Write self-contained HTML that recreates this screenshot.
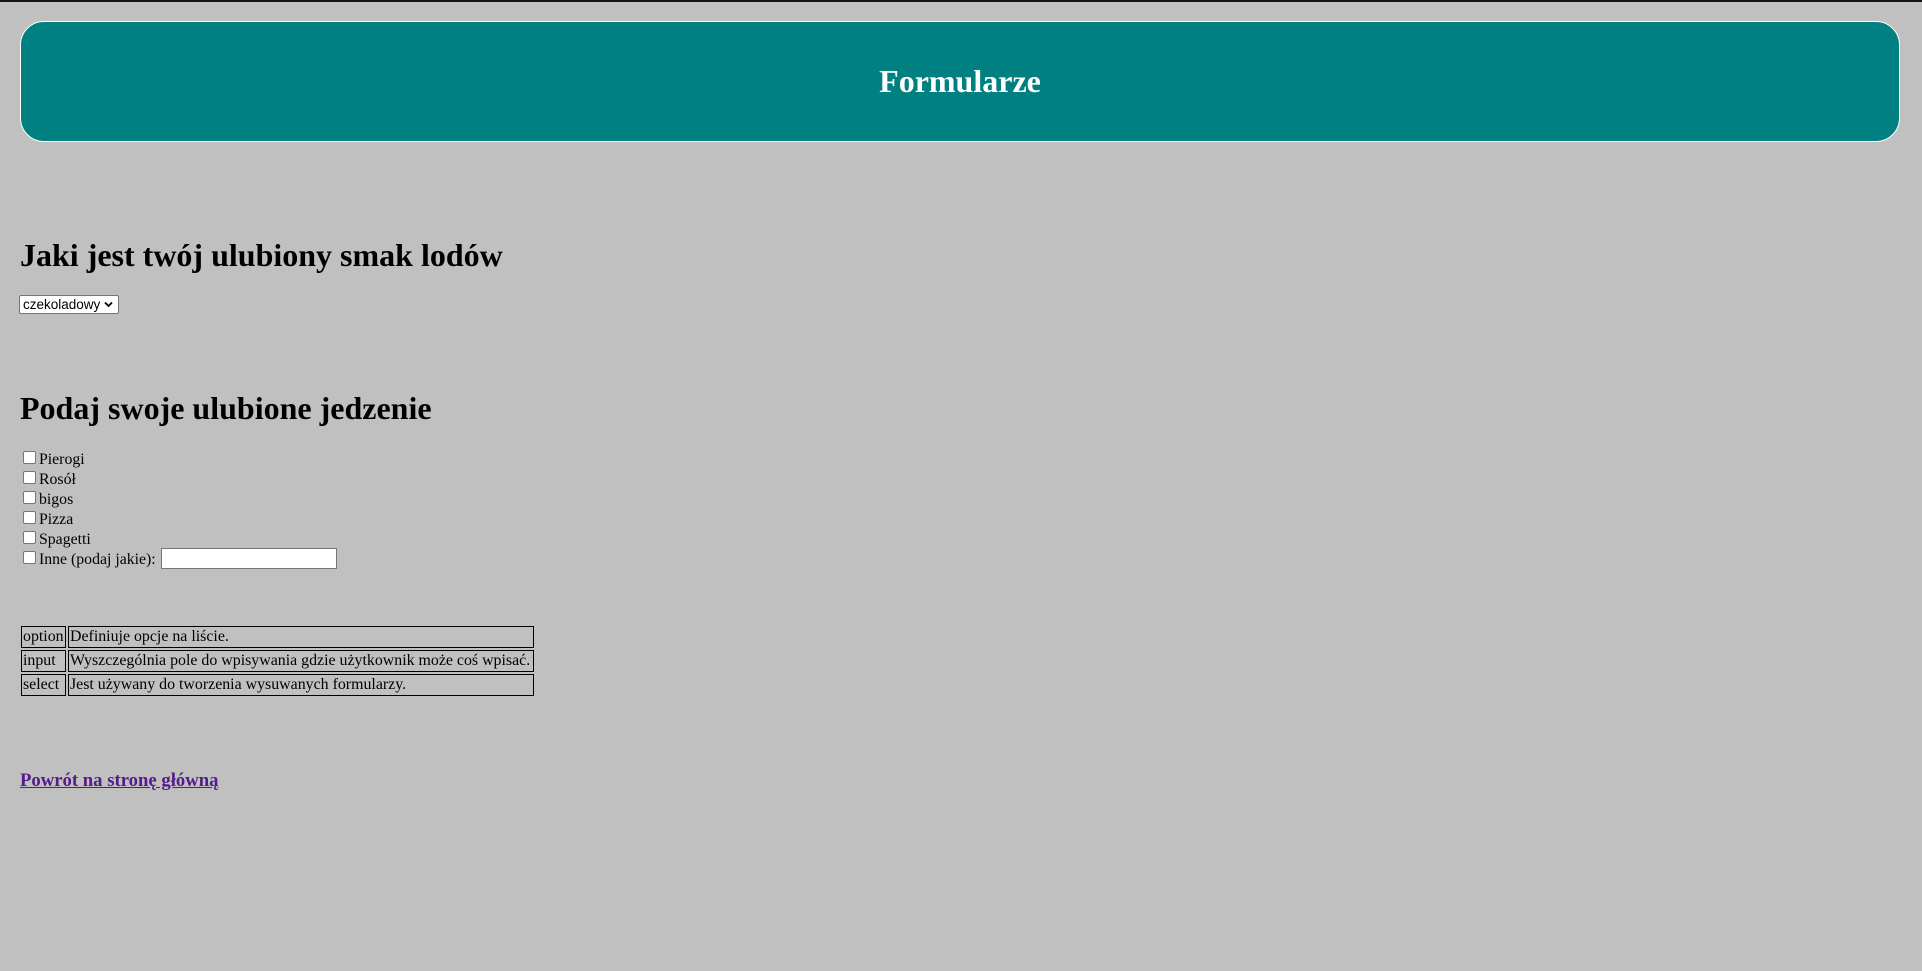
<!DOCTYPE html>
<html><head><meta charset="utf-8">
<style>
html,body{margin:0;padding:0;width:1922px;height:971px;overflow:hidden;background:#c0c0c0;font-family:"Liberation Serif",serif;color:#000;}
.a{position:absolute;white-space:nowrap;}
#topbar{position:absolute;left:0;top:0;width:1922px;height:2px;background:#1a1010;}
#hdr{position:absolute;left:20px;top:21px;width:1878px;height:119px;background:#008080;border:1px solid #fff;border-radius:24px;}
#hdr div{position:absolute;left:0;right:0;top:0;line-height:119px;text-align:center;color:#fff;font-weight:bold;font-size:32px;}
h2{margin:0;font-size:32px;font-weight:bold;line-height:36px;}
.cb{position:absolute;left:23px;width:11px;height:11px;border:1px solid #767676;border-radius:2px;background:#fff;}
.lb{position:absolute;left:39px;font-size:15.8px;line-height:20px;}
table{position:absolute;left:19px;top:624px;border-collapse:separate;border-spacing:2px;font-size:15.9px;table-layout:fixed;}
td{border:1px solid #000;padding:0 1px;height:20px;line-height:20px;white-space:nowrap;overflow:hidden;}
</style></head><body>
<div id="topbar"></div>
<div id="hdr"><div>Formularze</div></div>
<h2 class="a" style="left:20px;top:237px;">Jaki jest twój ulubiony smak lodów</h2>
<div class="a" style="left:19px;top:295px;width:100px;height:19px;background:#fff;border:1px solid #767676;border-radius:2px;font-family:'Liberation Sans',sans-serif;font-size:13.5px;line-height:18px;padding-left:3px;box-sizing:border-box;">czekoladowy<svg style="position:absolute;right:5px;top:5px" width="9" height="7" viewBox="0 0 9 7"><path d="M1 1.5L4.5 5 8 1.5" fill="none" stroke="#000" stroke-width="1.8"/></svg></div>
<h2 class="a" style="left:20px;top:390px;">Podaj swoje ulubione jedzenie</h2>
<div class="cb" style="top:451px"></div><div class="lb a" style="top:450px">Pierogi</div>
<div class="cb" style="top:471px"></div><div class="lb a" style="top:470px">Rosół</div>
<div class="cb" style="top:491px"></div><div class="lb a" style="top:490px">bigos</div>
<div class="cb" style="top:511px"></div><div class="lb a" style="top:510px">Pizza</div>
<div class="cb" style="top:531px"></div><div class="lb a" style="top:530px">Spagetti</div>
<div class="cb" style="top:551px"></div><div class="lb a" style="top:550px">Inne (podaj jakie):</div>
<div class="a" style="left:161px;top:548px;width:176px;height:21px;background:#fff;border:1px solid #767676;box-sizing:border-box;"></div>
<table>
<colgroup><col style="width:45px"><col style="width:466px"></colgroup>
<tr><td>option</td><td>Definiuje opcje na liście.</td></tr>
<tr><td>input</td><td>Wyszczególnia pole do wpisywania gdzie użytkownik może coś wpisać.</td></tr>
<tr><td>select</td><td>Jest używany do tworzenia wysuwanych formularzy.</td></tr>
</table>
<a class="a" style="left:20px;top:769px;font-size:18.7px;font-weight:bold;color:#551a8b;text-decoration:underline;line-height:24px;">Powrót na stronę główną</a>
</body></html>
